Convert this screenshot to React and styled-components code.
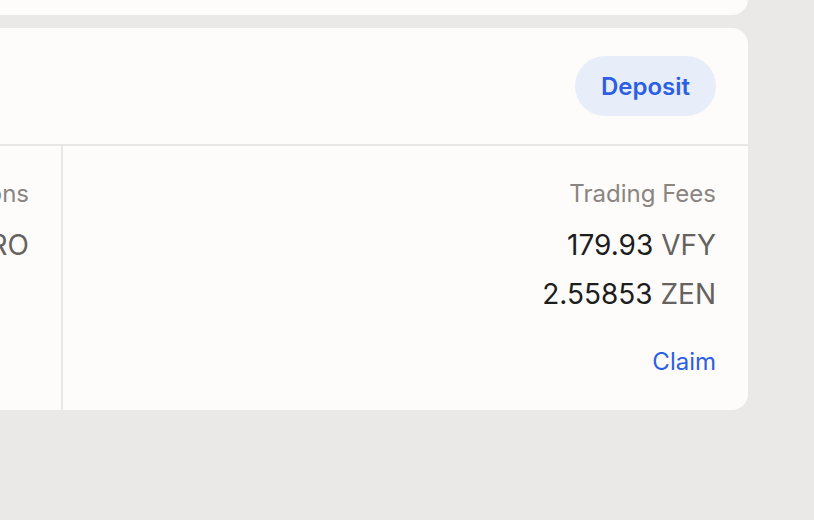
import React from "react";
import styled, { createGlobalStyle } from "styled-components";

const Global = createGlobalStyle`
  body {
    margin: 0;
    background: #eae9e7;
    font-family: Inter, "Noto Sans", sans-serif;
    overflow: hidden;
  }
`;

const Page = styled.div`
  width: 814px;
  height: 520px;
  padding-right: 66px;
  box-sizing: border-box;
  overflow: hidden;
`;

const Stack = styled.div`
  display: flex;
  flex-direction: column;
  gap: 13px;
  margin-left: -400px;
  margin-top: -85px;
`;

const Card = styled.div`
  background: #fdfcfb;
  border-radius: 16px;
  overflow: hidden;
`;

const TopCard = styled(Card)`
  height: 100px;
`;

const Header = styled.div`
  display: flex;
  justify-content: flex-end;
  align-items: center;
  padding: 28px 32px;
  border-bottom: 2px solid #e8e7e5;
`;

const DepositButton = styled.button`
  height: 60px;
  padding: 0 26px;
  border: none;
  border-radius: 30px;
  background: #e8edfa;
  color: #2d5fe3;
  font-family: Inter, sans-serif;
  font-size: 24px;
  font-weight: 600;
  cursor: pointer;
`;

const Body = styled.div`
  display: grid;
  grid-template-columns: 461px 1fr;
`;

const Column = styled.div`
  display: flex;
  flex-direction: column;
  align-items: flex-end;
  padding: 33px 32px 34px;
  & + & {
    border-left: 2px solid #e8e7e5;
  }
`;

const Label = styled.div`
  font-size: 24px;
  color: #8a8580;
  line-height: 29px;
  margin-bottom: 20px;
`;

const Amount = styled.div`
  font-size: 28px;
  line-height: 34px;
  color: #1d1d1d;
  margin-bottom: 15px;
`;

const Unit = styled.span`
  color: #65625f;
`;

const Claim = styled.a`
  margin-top: 21px;
  font-size: 24px;
  line-height: 29px;
  color: #2d5fe3;
  cursor: pointer;
`;

const rows = [
  { value: "179.93", unit: "VFY" },
  { value: "2.55853", unit: "ZEN" },
];

export default function App() {
  return (
    <Page>
      <Global />
      <Stack>
        <TopCard />
        <Card>
          <Header>
            <DepositButton>Deposit</DepositButton>
          </Header>
          <Body>
            <Column>
              <Label>Emissions</Label>
              <Amount>
                <Unit>0 ZERO</Unit>
              </Amount>
            </Column>
            <Column>
              <Label>Trading Fees</Label>
              {rows.map((r) => (
                <Amount key={r.unit}>
                  {r.value} <Unit>{r.unit}</Unit>
                </Amount>
              ))}
              <Claim>Claim</Claim>
            </Column>
          </Body>
        </Card>
      </Stack>
    </Page>
  );
}
